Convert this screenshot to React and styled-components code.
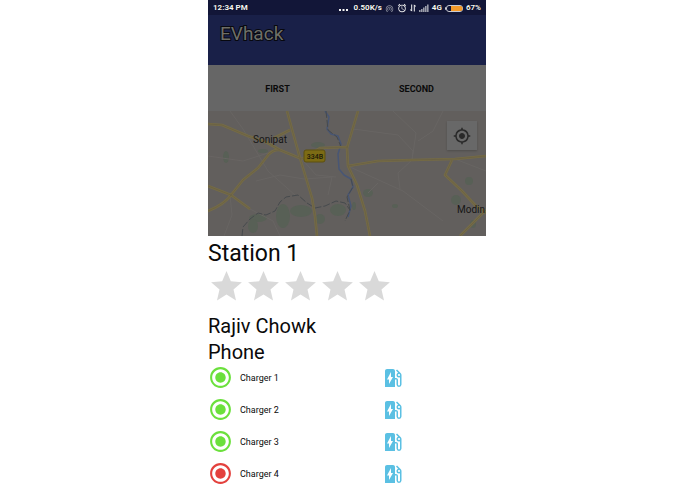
import React, { useState } from 'react';
import styled, { createGlobalStyle } from 'styled-components';
import {
  MdAccessAlarm,
  MdEvStation,
  MdMyLocation,
  MdRadioButtonChecked,
  MdStar,
  MdWifiTethering,
} from 'react-icons/md';

const colors = {
  statusBar: '#121638',
  header: '#192048',
  dimmed: '#666666',
  map: '#625f5d',
  road: '#766c45',
  lane: '#675f45',
  minor: '#686563',
  park: '#586056',
  river: '#485675',
  free: '#6be03c',
  busy: '#e3413d',
  pump: '#5bc0e3',
  star: '#d9d9d9',
};

const GlobalStyle = createGlobalStyle`
  * {
    box-sizing: border-box;
  }
  body {
    margin: 0;
    padding-right: 1px;
    background: #ffffff;
    color: #0a0a0a;
    font-family: Roboto, 'Liberation Sans', sans-serif;
  }
  button {
    padding: 0;
    border: 0;
    background: none;
    color: inherit;
    font: inherit;
    cursor: pointer;
  }
`;

const Screen = styled.main`
  width: 40%;
  min-width: 278px;
  margin: 0 auto;
`;

const StatusBar = styled.div`
  display: flex;
  align-items: center;
  justify-content: space-between;
  height: 15px;
  padding: 1px 5px 0;
  background: ${colors.statusBar};
  color: #f4f4f4;
  font-size: 8px;
  font-weight: 700;
  line-height: 14px;
  text-shadow: 0 0 1px #000000;
  svg {
    display: block;
  }
`;

const StatusGroup = styled.div`
  display: flex;
  align-items: center;
  gap: 3px;
`;

const Header = styled.header`
  height: 50px;
  padding: 8px 12px;
  background: ${colors.header};
  h1 {
    margin: 0;
    font-size: 19px;
    font-weight: 400;
    line-height: 22px;
    color: #6e6f67;
    -webkit-text-stroke: 2px #07080f;
    paint-order: stroke fill;
  }
`;

const Tabs = styled.nav`
  display: grid;
  grid-template-columns: 1fr 1fr;
  height: 46px;
  background: ${colors.dimmed};
`;

const Tab = styled.button`
  padding-top: 2px;
  font-size: 9px;
  font-weight: 700;
  text-transform: uppercase;
`;

const MapArea = styled.section`
  position: relative;
  > svg {
    display: block;
    width: 100%;
    background: ${colors.map};
  }
`;

const LocateButton = styled.button`
  position: absolute;
  top: 10px;
  right: 9px;
  display: flex;
  align-items: center;
  justify-content: center;
  width: 30px;
  height: 29px;
  background: #686868;
  color: #292929;
  box-shadow: 0 1px 2px rgba(0, 0, 0, 0.2);
`;

const Details = styled.section`
  h2,
  p {
    margin: 0;
    font-weight: 400;
  }
  h2 {
    padding-top: 4px;
    font-size: 23px;
    line-height: 28px;
  }
  p {
    font-size: 20px;
    line-height: 26px;
  }
`;

const Rating = styled.div`
  display: flex;
  margin-bottom: 8px;
`;

const Star = styled.button`
  color: ${(props) => (props.$active ? '#3f51b5' : colors.star)};
  svg {
    display: block;
  }
`;

const ChargerList = styled.ul`
  display: grid;
  gap: 8px;
  margin: 0;
  padding: 0;
  list-style: none;
`;

const Charger = styled.li`
  display: grid;
  grid-template-columns: 32px 141px 1fr;
  align-items: center;
  height: 24px;
  font-size: 9px;
  svg {
    display: block;
  }
`;

const Availability = styled.span`
  color: ${(props) => (props.$free ? colors.free : colors.busy)};
`;

const PumpButton = styled.button`
  justify-self: start;
  color: ${colors.pump};
`;

const chargers = [
  { name: 'Charger 1', free: true },
  { name: 'Charger 2', free: true },
  { name: 'Charger 3', free: true },
  { name: 'Charger 4', free: false },
];

const roads = [
  'M79 0 L85 22 L92 47 L104 87 L107 105 L109 125',
  'M0 13 L14 14 L40 25 L58 31 L72 39 L94 48',
  'M82 19 L66 27',
  'M72 39 Q66 38 61 43 L50 57 L35 69 L23 84 Q17 93 0 100',
  'M0 75 L23 84 L42 98',
  'M94 48 L112 37 L140 36',
  'M150 0 L139 37 L140 55 L149 74 L157 100 L162 125',
  'M140 55 L170 50 L204 49 L247 48 L278 45',
  'M244 49 L237 64 L254 80 L267 94 L278 102',
  'M278 99 L252 125',
];

const minorRoads = [
  'M22 0 L35 18 L60 60 L88 85',
  'M0 45 L35 50 L60 42',
  'M48 70 L72 64 L96 68 L124 66 L120 84',
  'M22 84 L24 104 L16 125',
  'M42 98 L65 110 L72 125',
  'M94 48 L108 64 L128 66',
  'M145 18 L190 24 L205 40 L204 49 M185 0 L208 22 L204 49',
  'M142 56 L195 80 L215 95 L235 110',
  'M204 49 L190 62 L192 78 M247 48 L278 60',
  'M160 82 L170 72 M235 0 L225 20 L210 30',
];

const parks = [
  [18, 46, 3, 6],
  [50, 107, 9, 4],
  [45, 115, 5, 7],
  [75, 105, 7, 12],
  [93, 100, 11, 6],
  [112, 108, 5, 5],
  [130, 99, 8, 6],
  [110, 34, 7, 3],
  [55, 40, 5, 2],
  [160, 82, 5, 4],
  [146, 95, 2, 4],
  [187, 95, 3, 2],
  [261, 70, 4, 4],
  [248, 89, 5, 5],
  [265, 113, 3, 4],
];

const Dots = () => (
  <svg width="12" height="8" viewBox="0 0 12 8" fill="currentColor">
    <path d="M0 5h2v2H0zM3.5 5h2v2h-2zM7 5h2v2H7z" />
  </svg>
);

const Arrows = () => (
  <svg width="6" height="8" viewBox="0 0 6 8" fill="none" stroke="currentColor">
    <path d="M1.7 0.5v6.5M0.2 5.4l1.5 1.8M4.3 7.5V1M5.8 2.6L4.3 0.8" />
  </svg>
);

const Signal = () => (
  <svg width="10" height="8" viewBox="0 0 10 8" fill="#9a9daa">
    <path d="M0 6h1.6v2H0zM2 5h1.6v3H2zM4 3.5h1.6V8H4zM6 2h1.6v6H6zM8 0.5h1.6V8H8z" />
  </svg>
);

const Battery = () => (
  <svg width="18" height="7" viewBox="0 0 18 7">
    <rect x="1.5" y="0.5" width="16" height="6" rx="2.5" fill="#121638" stroke="#c9cad2" />
    <path d="M0 2.2h1v2.6H0z" fill="#c9cad2" />
    <path d="M6 1h9.5a2 2 0 0 1 2 2v1a2 2 0 0 1-2 2H6z" fill="#f49a2a" />
  </svg>
);

const RoadMap = () => (
  <svg viewBox="0 0 278 125" role="img" aria-label="Map around Sonipat">
    {parks.map(([cx, cy, rx, ry]) => (
      <ellipse key={`${cx}-${cy}`} cx={cx} cy={cy} rx={rx} ry={ry} fill={colors.park} />
    ))}
    <g fill="none" strokeLinejoin="round">
      {minorRoads.map((d) => (
        <path key={d} d={d} stroke={colors.minor} />
      ))}
      <path
        d="M117 0 L121 6 L119 18 L123 23 L130 25 L133 33 L130 43 L131 58 L136 64 L143 68 L145 76 L140 84 L143 95 L140 106"
        stroke={colors.river}
        strokeWidth="1.5"
      />
      <path
        d="M118 0 L120 19 L129 26 L133 36 M143 68 L145 76 L139 86 L142 99 L137 110 M34 125 L35 116 L42 108 L50 102 L58 104 L67 100 L72 91 L78 86 L90 84 L99 92 L107 97 L117 95 L128 90 L137 92 L142 99"
        stroke="#464a4d"
        strokeDasharray="7 2"
      />
      {roads.map((d) => (
        <path key={d} d={d} stroke={colors.road} strokeWidth="2.6" />
      ))}
      {roads.map((d) => (
        <path key={d} d={d} stroke={colors.lane} strokeWidth="0.7" />
      ))}
    </g>
    <rect x="96" y="39" width="21" height="12" rx="2" fill="#7c6b14" stroke="#5d5010" />
    <text x="107" y="48" fontSize="7" fontWeight="500" textAnchor="middle" fill="#1a1808">
      334B
    </text>
    <g fontSize="10" fill="#161616">
      <text x="45" y="32">
        Sonipat
      </text>
      <text x="249" y="102">
        Modin
      </text>
    </g>
  </svg>
);

const App = () => {
  const [rating, setRating] = useState(0);

  return (
    <Screen>
      <GlobalStyle />
      <StatusBar>
        <span>12:34 PM</span>
        <StatusGroup>
          <Dots />
          <span>0.50K/s</span>
          <MdWifiTethering size={9} color="#8a8d9c" />
          <MdAccessAlarm size={10} />
          <Arrows />
          <Signal />
          <span>4G</span>
          <Battery />
          <span>67%</span>
        </StatusGroup>
      </StatusBar>
      <Header>
        <h1>EVhack</h1>
      </Header>
      <Tabs>
        <Tab>First</Tab>
        <Tab>Second</Tab>
      </Tabs>
      <MapArea>
        <RoadMap />
        <LocateButton aria-label="My location">
          <MdMyLocation size={18} />
        </LocateButton>
      </MapArea>
      <Details>
        <h2>Station 1</h2>
        <Rating>
          {[1, 2, 3, 4, 5].map((value) => (
            <Star
              key={value}
              $active={value <= rating}
              aria-label={`Rate ${value} of 5`}
              onClick={() => setRating(value)}
            >
              <MdStar size={37} />
            </Star>
          ))}
        </Rating>
        <p>Rajiv Chowk</p>
        <p>Phone</p>
        <ChargerList>
          {chargers.map(({ name, free }) => (
            <Charger key={name}>
              <Availability $free={free}>
                <MdRadioButtonChecked size={25} />
              </Availability>
              <span>{name}</span>
              <PumpButton aria-label={`Start ${name}`}>
                <MdEvStation size={24} />
              </PumpButton>
            </Charger>
          ))}
        </ChargerList>
      </Details>
    </Screen>
  );
};

export default App;
